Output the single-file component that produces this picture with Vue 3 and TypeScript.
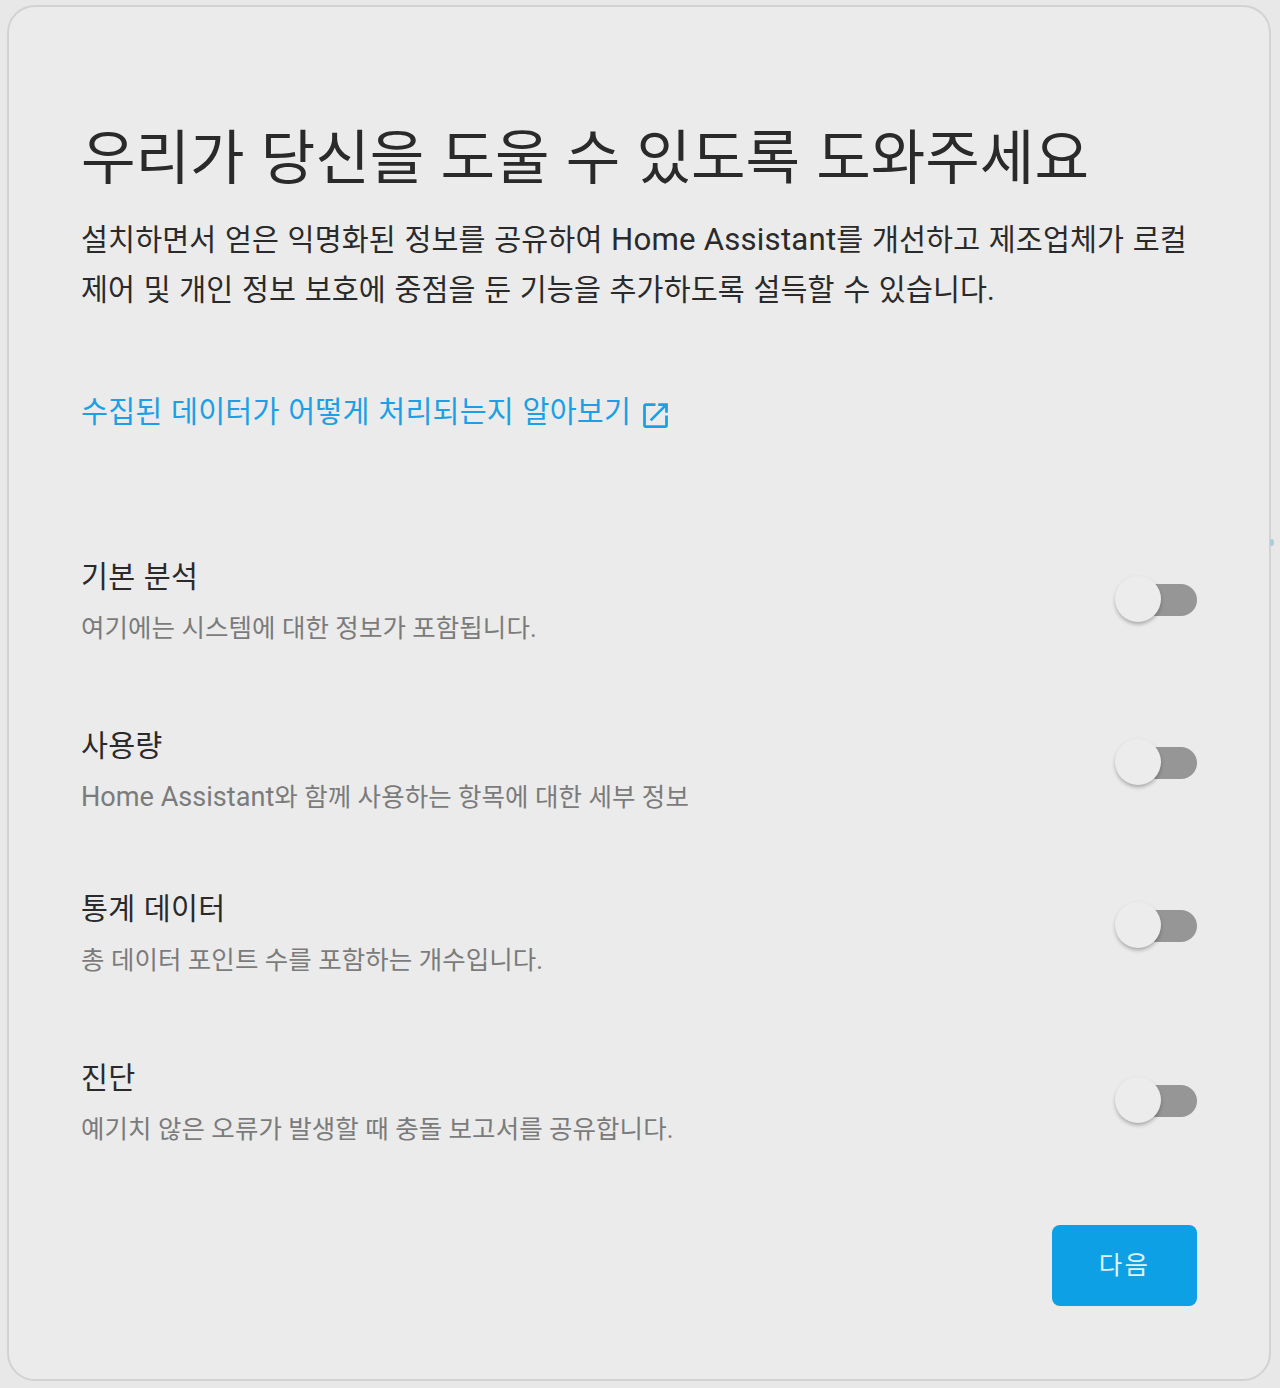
<script setup lang="ts">
import { ref } from 'vue'

interface Option {
  title: string
  latin?: string
  detail: string
  height: number
  offset: number
  on: boolean
}

const options = ref<Option[]>([
  { title: '기본 분석', detail: '여기에는 시스템에 대한 정보가 포함됩니다.', height: 169, offset: 23, on: false },
  { title: '사용량', latin: 'Home Assistant', detail: '와 함께 사용하는 항목에 대한 세부 정보', height: 163, offset: 17, on: false },
  { title: '통계 데이터', detail: '총 데이터 포인트 수를 포함하는 개수입니다.', height: 169, offset: 17, on: false },
  { title: '진단', detail: '예기치 않은 오류가 발생할 때 충돌 보고서를 공유합니다.', height: 172, offset: 23, on: false },
])
</script>

<template>
  <main class="page">
    <section class="card">
      <h1>우리가 당신을 도울 수 있도록 도와주세요</h1>
      <p class="intro">
        설치하면서 얻은 익명화된 정보를 공유하여 <span class="latin">Home Assistant</span>를 개선하고 제조업체가 로컬<br />
        제어 및 개인 정보 보호에 중점을 둔 기능을 추가하도록 설득할 수 있습니다.
      </p>
      <a class="learn" href="#">
        <span>수집된 데이터가 어떻게 처리되는지 알아보기</span>
        <svg viewBox="0 0 24 24"><path d="M14,3V5H17.59L7.76,14.83L9.17,16.24L19,6.41V10H21V3M19,19H5V5H12V3H5C3.89,3 3,3.9 3,5V19A2,2 0 0,0 5,21H19A2,2 0 0,0 21,19V12H19V19Z" /></svg>
      </a>
      <div class="options">
        <div v-for="o in options" :key="o.title" class="row" :style="{ height: o.height + 'px' }">
          <div>
            <div class="title">{{ o.title }}</div>
            <div class="detail"><span v-if="o.latin" class="latin">{{ o.latin }}</span>{{ o.detail }}</div>
          </div>
          <button class="switch" :style="{ marginTop: o.offset + 'px' }" role="switch" :aria-checked="o.on" :aria-label="o.title" @click="o.on = !o.on">
            <i class="knob"></i>
          </button>
        </div>
      </div>
      <footer><button class="next">다음</button></footer>
    </section>
    <i class="speck"></i>
  </main>
</template>

<style>
body { background: #e8e8e8; }
</style>

<style scoped>
.page { position: relative; box-sizing: border-box; height: 1388px; padding: 5px 9px 7px 7px; font-family: Roboto, "Noto Sans CJK KR", sans-serif; }
.card { box-sizing: border-box; height: 1376px; border: 2px solid #d2d2d2; border-radius: 28px; background: #ebebeb; padding: 104px 72px 0; color: #2a2a2a; }
h1 { margin: 0; height: 104px; font-size: 59.3px; font-weight: 400; line-height: 96px; white-space: nowrap; word-spacing: 1.4px; }
.intro { margin: 0; height: 152px; font-size: 29.3px; line-height: 50px; white-space: nowrap; letter-spacing: .12px; word-spacing: 1.15px; }
.latin { line-height: 1; }
.intro .latin { font-size: 31.2px; letter-spacing: .2px; word-spacing: 0; }
.learn { display: flex; align-items: center; height: 90px; color: #1b9fe6; font-size: 29.3px; line-height: 50px; text-decoration: none; white-space: nowrap; letter-spacing: .2px; word-spacing: 1.1px; }
.learn svg { width: 33px; height: 33px; margin: 6px 0 0 8px; fill: currentColor; }
.options { margin-top: 95px; }
.row { display: flex; justify-content: space-between; align-items: flex-start; }
.title { font-size: 29.3px; line-height: 50px; letter-spacing: .2px; word-spacing: 1.1px; }
.detail { font-size: 25.5px; line-height: 52px; color: #7b7b7b; white-space: nowrap; letter-spacing: .06px; }
.detail .latin { font-size: 27.1px; letter-spacing: 0; }
.switch { position: relative; width: 82px; height: 50px; border: 0; padding: 0; background: none; flex: none; }
.switch::before { content: ""; position: absolute; left: 10px; right: 0; top: 9px; height: 32px; border-radius: 16px; background: #969696; }
.knob { position: absolute; left: 0; top: 1px; width: 46px; height: 46px; border-radius: 50%; background: #ececec; box-shadow: 0 3px 4px -1px rgba(0,0,0,.28), 0 1px 5px rgba(0,0,0,.06); }
footer { display: flex; justify-content: flex-end; }
.next { width: 145px; height: 81px; border: 0; border-radius: 8px; padding: 0 0 6px; background: #0da0e5; color: #e0f3fb; font: 400 25.5px Roboto, "Noto Sans CJK KR", sans-serif; letter-spacing: 2.3px; }
.speck { position: absolute; left: 1270px; top: 539px; width: 4px; height: 7px; border-radius: 50%; background: #a6d0d9; filter: blur(.7px); }
</style>
